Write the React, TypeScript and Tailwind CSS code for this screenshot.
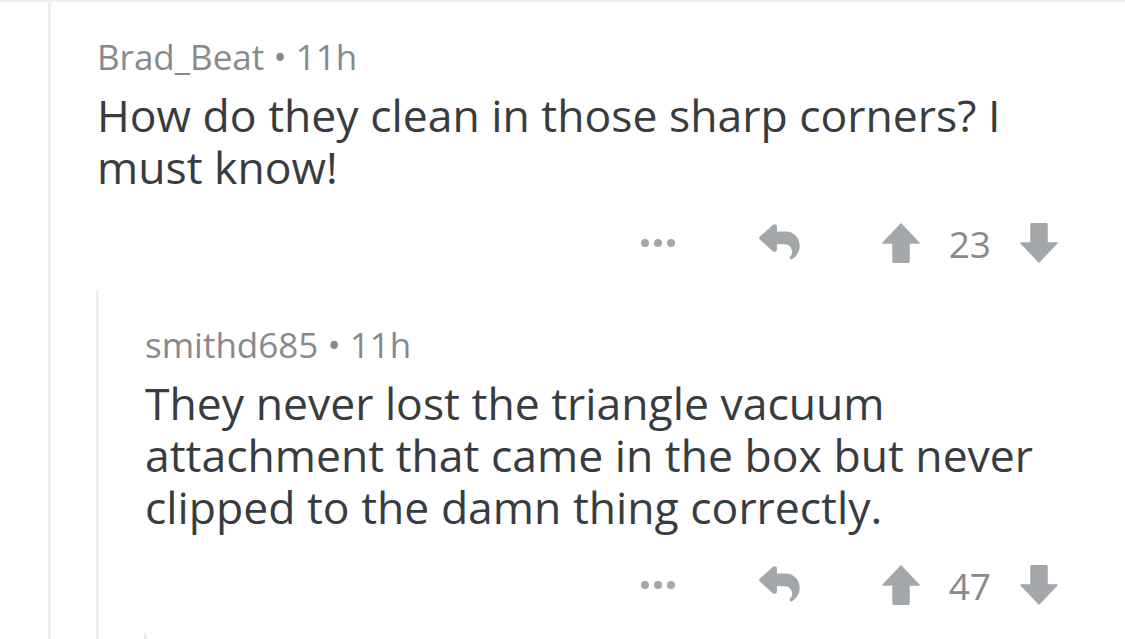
import React from "react";

const Up = ({ down = false }: { down?: boolean }) => (
  <svg width="38" height="40" viewBox="0 0 38 40" className={down ? "rotate-180" : ""}>
    <path d="M19 1 L37 20 L27 20 L27 38 Q27 39.5 25.5 39.5 L12.5 39.5 Q11 39.5 11 38 L11 20 L1 20 Z" fill="#a4a7a9" strokeLinejoin="round" stroke="#a4a7a9" strokeWidth="1.5" />
  </svg>
);

const Reply = () => (
  <svg width="41" height="38" viewBox="0 0 512 480" fill="#a4a7a9">
    <path d="M205 2.8c11.5 5.1 19 16.6 19 29.2v64H336c97.2 0 176 78.8 176 176c0 113.3-81.5 163.9-100.2 174.1c-2.5 1.4-5.3 1.9-8.1 1.9c-10.9 0-19.700-8.9-19.700-19.700c0-7.5 4.3-14.4 9.8-19.5c9.4-8.8 22.2-26.4 22.2-56.7c0-53-43-96-96-96H224v64c0 12.6-7.4 24.1-19 29.2s-25 3-34.4-5.4l-160-144C3.9 197.9 0 189.1 0 180s3.9-17.9 10.6-23.8l160-144c9.4-8.5 22.9-10.6 34.4-5.4z" />
  </svg>
);

const Actions = ({ n }: { n: string }) => (
  <div className="flex items-center justify-end pr-[67px] h-[40px]">
    <div className="flex gap-[5px] mr-[84px]">
      <span className="w-[8px] h-[8px] rounded-full bg-[#a4a7a9]" />
      <span className="w-[8px] h-[8px] rounded-full bg-[#a4a7a9]" />
      <span className="w-[8px] h-[8px] rounded-full bg-[#a4a7a9]" />
    </div>
    <div className="mr-[82px]"><Reply /></div>
    <Up />
    <span className="mx-[29px] text-[37px] leading-none text-[#878a8c]">{n}</span>
    <Up down />
  </div>
);

export default function App() {
  return (
    <div className="w-[1125px] h-[639px] overflow-hidden bg-white border-t-[2px] border-[#edeff1]" style={{ fontFamily: "'Open Sans', 'Noto Sans', sans-serif" }}>
      <div className="pl-[48px] pt-[1px]">
        <div className="border-l-[3px] border-[#edeff1] pl-[45px] h-[700px]">
          <div className="pl-[1px] pt-[34px]">
            <div className="text-[35px] leading-[40px] text-[#878a8c]">Brad_Beat • 11h</div>
            <div className="mt-[12px] text-[44.5px] leading-[52px] text-[#383c3f] w-[940px]">
              How do they clean in those sharp corners? I must know!
            </div>
          </div>
          <div className="mt-[30px]"><Actions n="23" /></div>
          <div className="mt-[28px] border-l-[3px] border-[#edeff1] pl-[46px] h-[500px]">
            <div className="pt-[34px]">
              <div className="text-[35px] leading-[40px] text-[#878a8c]">smithd685 • 11h</div>
              <div className="mt-[12px] text-[44.5px] leading-[52px] text-[#383c3f] w-[930px]">
                They never lost the triangle vacuum attachment that came in the box but never clipped to the damn thing correctly.
              </div>
            </div>
            <div className="mt-[32px]"><Actions n="47" /></div>
            <div className="-ml-[1px] mt-[28px] border-l-[3px] border-[#edeff1] h-[100px]" />
          </div>
        </div>
      </div>
    </div>
  );
}
